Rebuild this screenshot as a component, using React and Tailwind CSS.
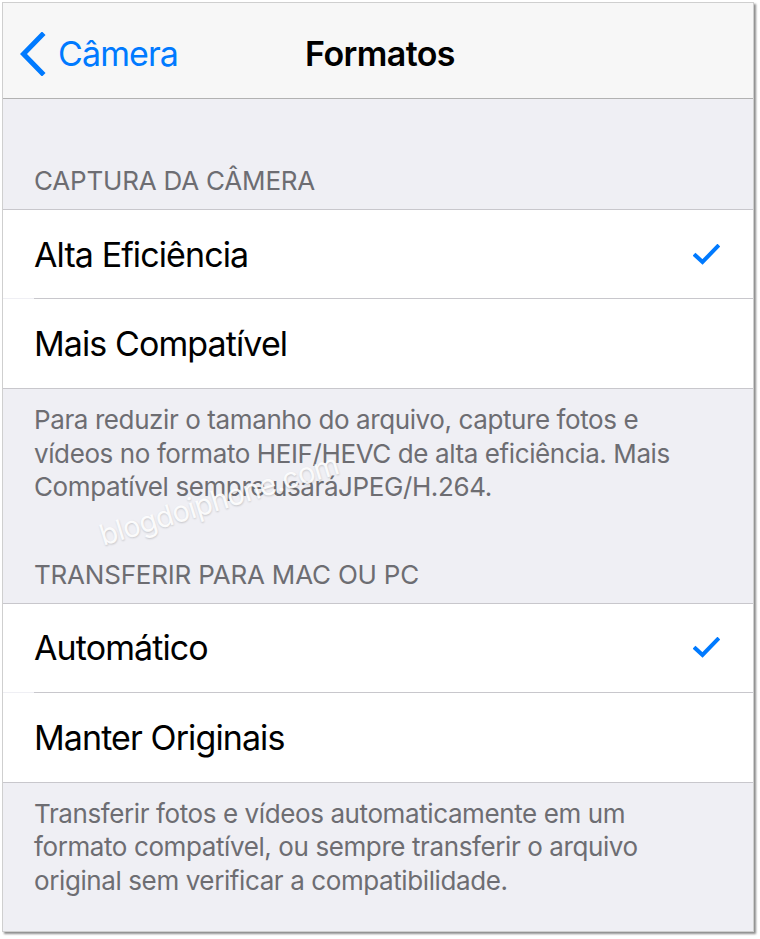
const font = { fontFamily: '"Inter", "Roboto", "Liberation Sans", sans-serif' };

function Check() {
  return (
    <svg width="27" height="21" viewBox="0 0 27 21" fill="none">
      <path
        d="M2.5 11.5L9.5 18L24.5 2.5"
        stroke="#007aff"
        strokeWidth="4"
        strokeLinecap="square"
      />
    </svg>
  );
}

function Row({ label, checked, last }) {
  return (
    <>
      <div
        className={`${last ? "h-[89px]" : "h-[88px]"} flex items-center justify-between pl-[31px] pr-[33px] bg-white`}
      >
        <span className="text-[34px] text-black tracking-[-0.9px]">{label}</span>
        {checked && <Check />}
      </div>
      {!last && <div className="ml-[31px] h-px bg-[#c8c7cc]" />}
    </>
  );
}

function SectionHeader({ children, height }) {
  return (
    <div
      className={`${height} flex items-end pl-[31px] pb-[12px] text-[26px] leading-[32px] text-[#6d6d72] tracking-[-0.2px]`}
    >
      {children}
    </div>
  );
}

export default function App() {
  return (
    <div className="w-[760px] h-[939px] bg-white" style={font}>
      <div className="relative ml-[2px] mt-[2px] w-[752px] h-[930px] border border-[#cfcfcf] shadow-[2px_2px_2px_rgba(0,0,0,0.45)] bg-[#efeff4] overflow-hidden">
        {/* Nav bar */}
        <div className="relative h-[96px] pt-[6px] bg-[#f7f7f7] border-b border-[#b2b2b2] flex items-center">
          <div className="flex items-center pl-[16px] text-[#007aff]">
            <svg width="28" height="44" viewBox="0 0 28 44" fill="none">
              <path
                d="M23 3L4.5 22L23 41"
                stroke="#007aff"
                strokeWidth="5"
                strokeLinecap="square"
              />
            </svg>
            <span className="ml-[11px] text-[34px] tracking-[-0.9px]">Câmera</span>
          </div>
          <div className="absolute inset-0 pt-[6px] flex items-center justify-center">
            <span className="ml-[4px] text-[34px] font-semibold text-black tracking-[-0.6px]">
              Formatos
            </span>
          </div>
        </div>

        <SectionHeader height="h-[110px]">CAPTURA DA CÂMERA</SectionHeader>
        <div className="border-y border-[#c8c7cc]">
          <Row label="Alta Eficiência" checked />
          <Row label="Mais Compatível" last />
        </div>
        <div className="pl-[31px] pr-[20px] pt-[14px] text-[26px] leading-[33.5px] text-[#6d6d72] tracking-[-0.4px]">
          Para reduzir o tamanho do arquivo, capture fotos e
          <br />
          vídeos no formato HEIF/HEVC de alta eficiência. Mais
          <br />
          Compatível sempre usaráJPEG/H.264.
        </div>

        <SectionHeader height="h-[99px]">TRANSFERIR PARA MAC OU PC</SectionHeader>
        <div className="border-y border-[#c8c7cc]">
          <Row label="Automático" checked />
          <Row label="Manter Originais" last />
        </div>
        <div className="pl-[31px] pr-[20px] pt-[14px] text-[26px] leading-[33.5px] text-[#6d6d72] tracking-[-0.4px]">
          Transferir fotos e vídeos automaticamente em um
          <br />
          formato compatível, ou sempre transferir o arquivo
          <br />
          original sem verificar a compatibilidade.
        </div>

        {/* watermark */}
        <div className="absolute left-[92px] top-[480px] -rotate-[17deg] text-[29px] leading-[34px] text-white/90 [text-shadow:0_1px_2px_rgba(0,0,0,0.18)] tracking-[-0.5px]">
          blogdoiphone.com
        </div>
      </div>
    </div>
  );
}
